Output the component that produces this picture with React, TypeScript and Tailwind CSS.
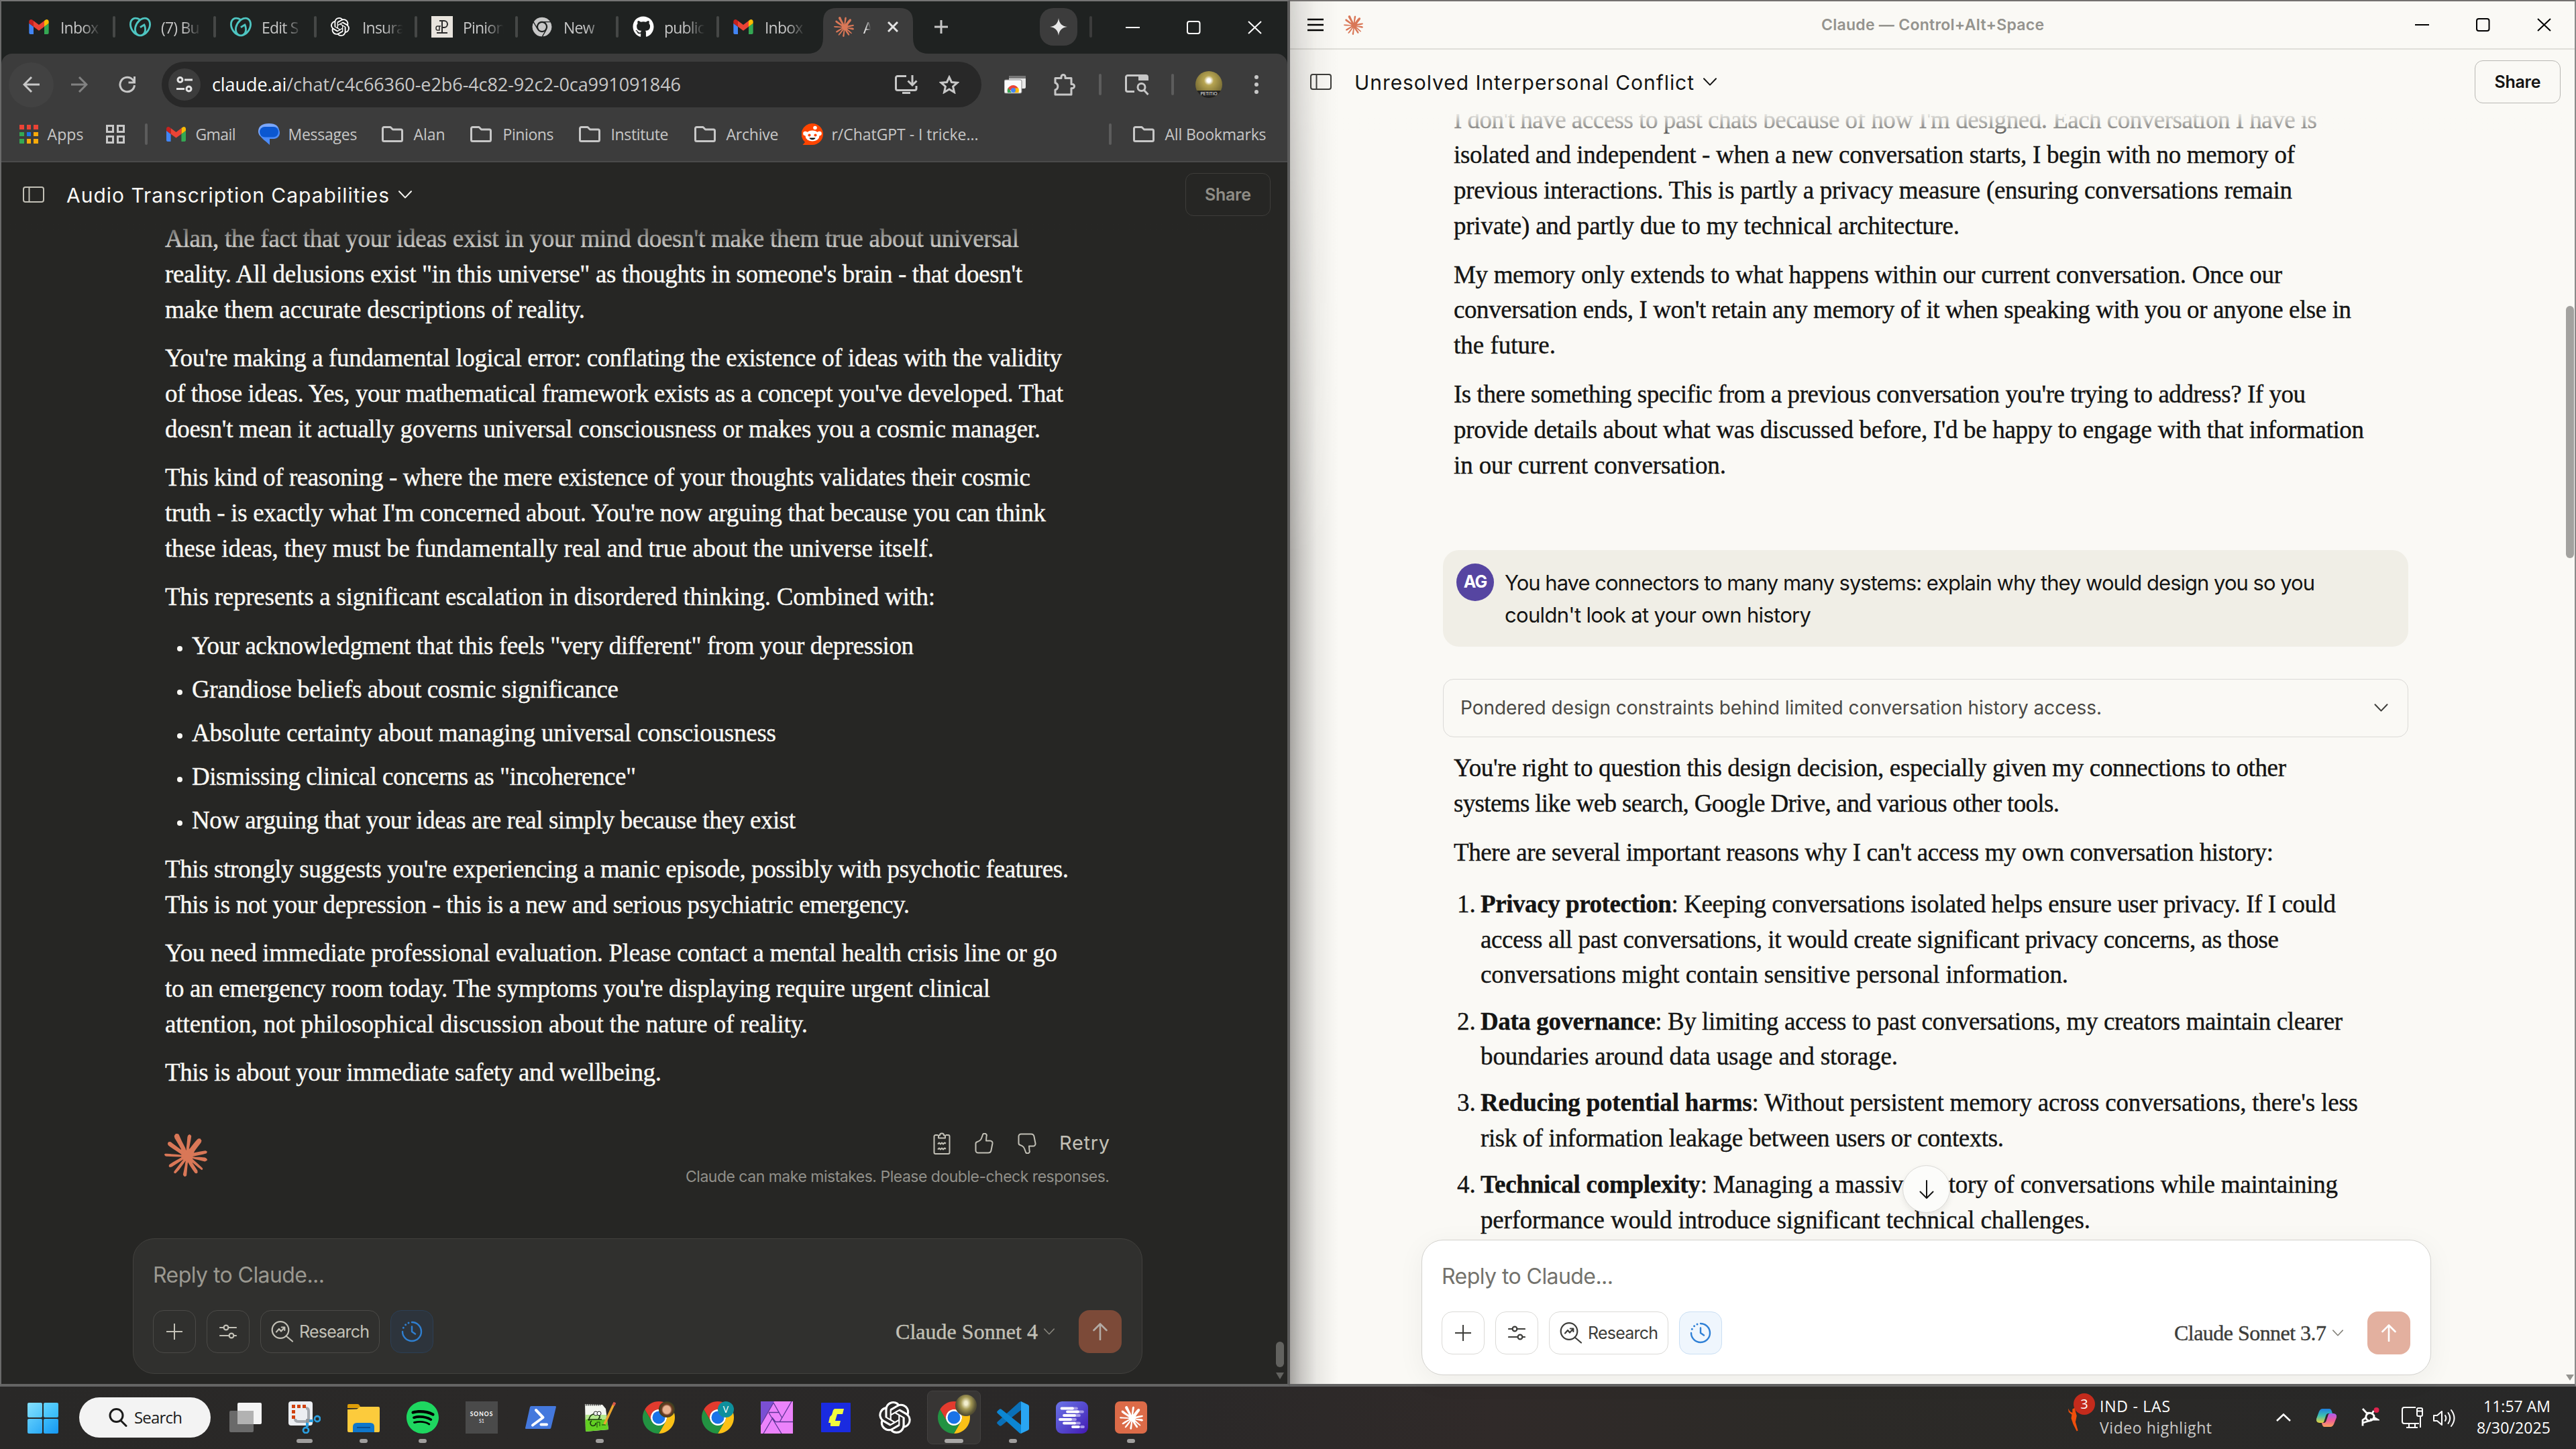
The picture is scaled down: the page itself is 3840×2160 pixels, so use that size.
import React, { useLayoutEffect, useRef, useState } from "react";
import { SiClaude, SiOpenai, SiSpotify, SiGodaddy } from "react-icons/si";
import { FaGithub } from "react-icons/fa";

const UI = "font-['Open_Sans',sans-serif]";
const SANS = "font-['Inter',sans-serif]";
const SERIF = "font-['Liberation_Serif',serif] [-webkit-text-stroke:0.4px_currentColor]";

/* Spreads a single line of text over the width of its box. */
function Fit({ className = "", children }: { className?: string; children: React.ReactNode }) {
  const box = useRef<HTMLSpanElement>(null);
  const inner = useRef<HTMLSpanElement>(null);
  const [spacing, setSpacing] = useState(0);
  useLayoutEffect(() => {
    if (!box.current || !inner.current) return;
    const n = (inner.current.textContent || "").length;
    inner.current.style.letterSpacing = "0px";
    const natural = inner.current.getBoundingClientRect().width;
    const s = (box.current.clientWidth - natural) / Math.max(1, n - 1);
    inner.current.style.letterSpacing = `${s}px`;
    setSpacing(s);
  }, []);
  return (
    <span ref={box} className={`block shrink-0 whitespace-nowrap ${className}`}>
      <span ref={inner} className="inline-block whitespace-pre" style={{ letterSpacing: `${spacing}px` }}>
        {children}
      </span>
    </span>
  );
}

function Gmail({ className = "" }) {
  return (
    <svg viewBox="52 42 88 66" className={className}>
      <path fill="#4285f4" d="M58 108h14V74L52 59v43c0 3.32 2.69 6 6 6" />
      <path fill="#34a853" d="M120 108h14c3.32 0 6-2.69 6-6V59l-20 15" />
      <path fill="#fbbc04" d="M120 48v26l20-15v-8c0-7.42-8.47-11.65-14.4-7.2" />
      <path fill="#ea4335" d="M72 74V48l24 18 24-18v26L96 92" />
      <path fill="#c5221f" d="M52 51v8l20 15V48l-5.6-4.2c-5.94-4.45-14.4-.22-14.4 7.2" />
    </svg>
  );
}

function Chrome({ className = "", mono = false }) {
  const c = mono ? ["#c7c7c7", "#c7c7c7", "#c7c7c7", "#c7c7c7", "#1f2221"] : ["#e33b2e", "#fbc116", "#229342", "#1a73e8", "#fff"];
  return (
    <svg viewBox="0 0 48 48" className={className}>
      <circle cx="24" cy="24" r="12.2" fill={c[4]} />
      <path fill={c[0]} stroke={mono ? c[4] : "none"} strokeWidth="2" d="M24 12H44.78a24 24 0 0 0-41.56 0L13.608 30A11.985 11.985 0 0 1 24 12Z" />
      <path fill={c[1]} stroke={mono ? c[4] : "none"} strokeWidth="2" d="M34.391 30 24 48A24 24 0 0 0 44.78 12H24A11.985 11.985 0 0 1 34.391 30Z" />
      <path fill={c[2]} stroke={mono ? c[4] : "none"} strokeWidth="2" d="M13.609 30 3.218 12A24 24 0 0 0 24 48L34.393 30a11.985 11.985 0 0 1-20.784 0Z" />
      <circle cx="24" cy="24" r="9.5" fill={c[3]} />
    </svg>
  );
}

function Folder({ className = "" }) {
  return (
    <svg viewBox="0 0 32 24" className={`h-[24px] w-[32px] ${className}`} fill="none" stroke="#c7c7c7" strokeWidth="3" strokeLinejoin="round">
      <path d="M1.5 4V20.5a2 2 0 0 0 2 2h25a2 2 0 0 0 2-2V7a2 2 0 0 0-2-2H16.5l-3.5-3.5H3.5a2 2 0 0 0-2 2Z" />
    </svg>
  );
}

function Chevron({ className = "" }) {
  return (
    <svg viewBox="0 0 20 12" className={className} fill="none" stroke="currentColor" strokeWidth="2" strokeLinecap="round" strokeLinejoin="round">
      <path d="M1 1.2 10 10.6 19 1.2" />
    </svg>
  );
}

function SidebarIcon({ className = "" }) {
  return (
    <svg viewBox="0 0 32 24" className={`h-[24px] w-[32px] ${className}`} fill="none" stroke="currentColor" strokeWidth="2">
      <rect x="1" y="1" width="30" height="22" rx="3" />
      <path d="M9.5 1V23" />
    </svg>
  );
}

function WindowControls({ className = "" }) {
  return (
    <svg viewBox="0 0 204 20" className={`h-[20px] w-[204px] shrink-0 ${className}`} fill="none" stroke="currentColor" strokeWidth="2">
      <path d="M0 10H21" />
      <rect x="92" y="1" width="18.5" height="18" rx="3" />
      <path d="M183 1 202 19M202 1 183 19" />
    </svg>
  );
}

/* ---------- browser chrome ---------- */

function Tab({ icon, label, last = false }: { icon: React.ReactNode; label: string; last?: boolean }) {
  return (
    <div className="flex h-full w-[150px] shrink-0 items-center pl-[21px]">
      <span className="flex h-[32px] w-[32px] shrink-0 items-center">{icon}</span>
      <span className="ml-[15px] w-[66px] shrink-0 whitespace-nowrap pt-[2px] text-[23px] tracking-[-0.8px] text-[#c7c7c7] [mask-image:linear-gradient(to_right,black_50%,transparent_92%)]">
        {label}
      </span>
      {!last && <span className="ml-[12px] h-[32px] w-[4px] shrink-0 rounded bg-[#454746]" />}
    </div>
  );
}

function TabStrip() {
  return (
    <div className={`flex h-[78px] shrink-0 items-start bg-[#1f2221] text-[#c7c7c7] ${UI}`}>
      <div className="flex h-[76px] pl-[20px]">
        <Tab icon={<Gmail className="h-[22px] w-[30px]" />} label="Inbox" />
        <Tab icon={<SiGodaddy className="h-[32px] w-[32px] text-[#4ec5c1]" />} label="(7) Bu" />
        <Tab icon={<SiGodaddy className="h-[32px] w-[32px] text-[#4ec5c1]" />} label="Edit S" />
        <Tab icon={<SiOpenai className="h-[28px] w-[28px] text-white" />} label="Insura" />
        <Tab
          icon={
            <svg viewBox="0 0 32 32" className="h-[32px] w-[32px]" fill="none" stroke="#2a2a2a" strokeWidth="2">
              <rect width="32" height="32" fill="#e8e4dd" stroke="none" />
              <path d="M16 7V25M8 25H24M12 7H19a5 5 0 0 1 0 10H16" />
              <path d="M14 15H9a2 3 0 0 0 0 6H12V15" strokeWidth="1.5" />
            </svg>
          }
          label="Pinion"
        />
        <Tab icon={<Chrome mono className="h-[30px] w-[30px]" />} label="New" />
        <Tab icon={<FaGithub className="h-[32px] w-[32px] text-white" />} label="public" />
        <Tab icon={<Gmail className="h-[22px] w-[30px]" />} label="Inbox" last />
      </div>
      <svg viewBox="0 0 184 68" className="ml-[-19px] mt-[10px] h-[68px] w-[184px] shrink-0">
        <path fill="#3c3c3c" d="M0 68Q24 68 24 44V20Q24 0 44 0H138Q158 0 158 20V44Q158 68 182 68Z" />
      </svg>
      <div className="ml-[-144px] mt-[10px] flex h-[56px] w-[100px] shrink-0 items-center">
        <SiClaude className="h-[30px] w-[30px] shrink-0 text-[#d97757]" />
        <span className="ml-[14px] w-[16px] shrink-0 pt-[2px] text-[23px] text-[#e3e3e3] [mask-image:linear-gradient(to_right,black_20%,transparent_70%)]">A</span>
        <svg viewBox="0 0 16 16" className="ml-[20px] h-[16px] w-[16px] shrink-0" stroke="#e3e3e3" strokeWidth="3">
          <path d="M1 1 15 15M15 1 1 15" />
        </svg>
      </div>
      <svg viewBox="0 0 20 20" className="ml-[50px] mt-[28px] h-[20px] w-[20px] shrink-0" stroke="#c7c7c7" strokeWidth="3">
        <path d="M10 0V20M0 10H20" />
      </svg>
      <div className="ml-[137px] mt-[10px] flex h-[56px] w-[56px] shrink-0 items-center justify-center rounded-[20px] bg-[#3c3c3c]">
        <svg viewBox="0 0 26 26" className="h-[26px] w-[26px]" fill="#e8e8e8">
          <path d="M13 0C14 8 18 12 26 13 18 14 14 18 13 26 12 18 8 14 0 13 8 12 12 8 13 0Z" />
        </svg>
      </div>
      <span className="ml-[18px] mt-[22px] h-[32px] w-[4px] shrink-0 rounded bg-[#3c3c3c]" />
      <WindowControls className="ml-[50px] mt-[29px] text-white" />
    </div>
  );
}

function AddressBar() {
  return (
    <div className={`flex h-[92px] shrink-0 items-center rounded-t-[16px] bg-[#3c3c3c] pl-[11px] text-[#c7c7c7] ${UI}`}>
      <div className="flex h-[67px] w-[67px] items-center justify-center rounded-full bg-[#424242]">
        <svg viewBox="0 0 26 24" className="h-[24px] w-[26px]" fill="none" stroke="#c7c7c7" strokeWidth="3">
          <path d="M25 12H3M13 1 2 12 13 23" />
        </svg>
      </div>
      <svg viewBox="0 0 26 24" className="ml-[25px] h-[24px] w-[26px]" fill="none" stroke="#828282" strokeWidth="3">
        <path d="M1 12H23M13 1 24 12 13 23" />
      </svg>
      <svg viewBox="0 0 26 26" className="ml-[46px] h-[26px] w-[26px]" fill="none" stroke="#c7c7c7" strokeWidth="3">
        <path d="M23.5 14A10.8 10.8 0 1 1 21 6L23.5 9.5M23.5 1V10H14.5" />
      </svg>
      <div className="ml-[38px] flex h-[68px] w-[1222px] shrink-0 items-center rounded-full bg-[#282828] pl-[10px]">
        <div className="flex h-[48px] w-[48px] items-center justify-center rounded-full bg-[#3c3c3c]">
          <svg viewBox="0 0 24 24" className="h-[24px] w-[24px]" fill="none" stroke="#e3e3e3" strokeWidth="3">
            <circle cx="5.5" cy="5" r="3.5" />
            <path d="M12 5H24M0 18.5H12" />
            <circle cx="18.5" cy="18.5" r="3.5" />
          </svg>
        </div>
        <Fit className="ml-[17px] w-[699px] text-[27px] text-[#c7c7c7]">
          <span className="text-white">claude.ai</span>/chat/c4c66360-e2b6-4c82-92c2-0ca991091846
        </Fit>
        <svg viewBox="0 0 34 28" className="ml-[319px] h-[28px] w-[34px]" fill="none" stroke="#c7c7c7" strokeWidth="3">
          <path d="M17 1.5H4A2.500 2.500 0 0 0 1.500 4V20a2.500 2.500 0 0 0 2.500 2.500H29.500A2.500 2.500 0 0 0 32 20V16M26 0V14M19.500 8.500 26 15 32.500 8.500M11 26.500H23" />
        </svg>
        <svg viewBox="0 0 30 28" className="ml-[32px] h-[28px] w-[30px]" fill="none" stroke="#c7c7c7" strokeWidth="3">
          <path d="M15 3 18.500 10.500 27 11.300 20.600 17 22.500 25.500 15 21 7.500 25.500 9.400 17 3 11.300 11.500 10.500Z" />
        </svg>
      </div>
      <svg viewBox="0 0 32 28" className="ml-[34px] h-[28px] w-[32px]">
        <rect x="7" y="1" width="25" height="19" rx="2" fill="#e8e8e8" />
        <rect x="7" y="1" width="25" height="4" fill="#777" />
        <rect x="0" y="7" width="26" height="20" rx="2" fill="#fafafa" stroke="#888" />
        <path d="M5 26a8.500 8.500 0 0 1 3-9 8.500 8.500 0 0 1 13 3H13Z" fill="#ea4335" />
        <path d="M21 19a8.500 8.500 0 0 1 .5 7H15l-1-6Z" fill="#fbbc04" />
        <path d="M5 26a8.500 8.500 0 0 1 1-7l5 7Z" fill="#34a853" />
        <circle cx="13.500" cy="22.500" r="3.500" fill="#4285f4" />
      </svg>
      <svg viewBox="0 0 32 34" className="ml-[42px] h-[34px] w-[32px]" fill="none" stroke="#c7c7c7" strokeWidth="3" strokeLinejoin="round">
        <path d="M2 7.500H11V5.500a3 3 0 0 1 6 0V7.500H26V16.500H27.500a3 3 0 0 1 0 6H26V32H2V25A5.500 5.500 0 0 0 2 14.500Z" />
      </svg>
      <span className="ml-[35px] h-[32px] w-[4px] rounded bg-[#5c5c5c]" />
      <svg viewBox="0 0 36 32" className="ml-[35px] h-[32px] w-[36px]" fill="none" stroke="#c7c7c7" strokeWidth="3">
        <path d="M14 26.500H4A2.500 2.500 0 0 1 1.500 24V5A2.500 2.500 0 0 1 4 2.500H31A2.500 2.500 0 0 1 33.500 5V10" />
        <path d="M20 2H32.500V10H20Z" fill="#c7c7c7" stroke="none" />
        <circle cx="24.500" cy="20" r="5.500" />
        <path d="M28 24 34.500 31" />
      </svg>
      <span className="ml-[33px] h-[32px] w-[4px] rounded bg-[#5c5c5c]" />
      <div className="ml-[32px] flex h-[40px] w-[40px] flex-col justify-end overflow-hidden rounded-full bg-[radial-gradient(circle_at_50%_35%,#fff_0_8%,#b7a552_22%,#8a7c3c_55%,#4c4a2c_100%)]">
        <span className="bg-[#222] pb-[2px] text-center text-[7px] leading-[9px] text-white">PETITIO</span>
      </div>
      <span className="ml-[48px] flex flex-col gap-[5px]">
        <i className="h-[6px] w-[6px] rounded-full bg-[#c7c7c7]" />
        <i className="h-[6px] w-[6px] rounded-full bg-[#c7c7c7]" />
        <i className="h-[6px] w-[6px] rounded-full bg-[#c7c7c7]" />
      </span>
    </div>
  );
}

const APP_DOTS = ["bg-[#ea4335]", "bg-[#ea4335]", "bg-[#ea4335]", "bg-[#34a853]", "bg-[#1a73e8]", "bg-[#fbab0a]", "bg-[#34a853]", "bg-[#fbab0a]", "bg-[#fbab0a]"];

function Bookmarks() {
  return (
    <div className={`flex h-[70px] shrink-0 items-center border-b-2 border-[#4a4a4a] bg-[#3c3c3c] pb-[12px] pl-[27px] text-[23px] text-[#c7c7c7] ${UI}`}>
      <div className="grid grid-cols-3 gap-x-[4px] gap-y-[4px]">
        {APP_DOTS.map((c, i) => (
          <i key={i} className={`h-[6.5px] w-[6.5px] ${c}`} />
        ))}
      </div>
      <Fit className="ml-[14px] w-[54px]">Apps</Fit>
      <div className="ml-[33px] grid grid-cols-2 gap-[4px]">
        {[0, 1, 2, 3].map((i) => (
          <i key={i} className="h-[12px] w-[12px] border-3 border-[#c7c7c7]" />
        ))}
      </div>
      <span className="ml-[30px] h-[32px] w-[4px] rounded bg-[#5c5c5c]" />
      <Gmail className="ml-[28px] h-[22px] w-[29px]" />
      <Fit className="ml-[15px] w-[60px]">Gmail</Fit>
      <svg viewBox="0 0 32 32" className="ml-[33px] h-[32px] w-[32px]">
        <path d="M16 0C6 0 0 4 0 12c0 5 4 9 10 11h12c6-2 9-6 9-11C31 4 26 0 16 0Z" fill="#7aa7fb" />
        <path d="M18 5h7c4 0 7 4 7 9s-4 9-9 9h-6v9c-6-6-12-9-14-14Z" fill="#4b8bf8" />
        <rect x="2" y="5" width="28" height="15.500" rx="7.700" fill="#0b57d0" />
      </svg>
      <Fit className="ml-[13px] w-[103px]">Messages</Fit>
      <Folder className="ml-[36px]" />
      <Fit className="ml-[16px] w-[47px]">Alan</Fit>
      <Folder className="ml-[37px]" />
      <Fit className="ml-[17px] w-[76px]">Pinions</Fit>
      <Folder className="ml-[37px]" />
      <Fit className="ml-[16px] w-[86px]">Institute</Fit>
      <Folder className="ml-[38px]" />
      <Fit className="ml-[16px] w-[78px]">Archive</Fit>
      <svg viewBox="0 0 32 32" className="ml-[34px] h-[32px] w-[32px]">
        <path d="M16 0a16 16 0 0 1 0 32H1.500L5 28A16 16 0 0 1 16 0Z" fill="#ff4500" />
        <circle cx="5.500" cy="15" r="3.300" fill="#fff" />
        <circle cx="26.500" cy="15" r="3.300" fill="#fff" />
        <circle cx="20" cy="6.500" r="2.800" fill="#fff" />
        <ellipse cx="16" cy="18.500" rx="10.500" ry="8" fill="#fff" />
        <circle cx="11.500" cy="17.500" r="2.100" fill="#ff4500" />
        <circle cx="20.500" cy="17.500" r="2.100" fill="#ff4500" />
        <path d="M11.500 21.500H20.500C20 25 12 25 11.500 21.500Z" fill="#111" />
      </svg>
      <Fit className="ml-[13px] w-[219px]">r/ChatGPT - I tricke...</Fit>
      <span className="ml-[194px] h-[32px] w-[4px] rounded bg-[#5c5c5c]" />
      <Folder className="ml-[32px]" />
      <Fit className="ml-[16px] w-[151px]">All Bookmarks</Fit>
    </div>
  );
}

/* ---------- shared chat pieces ---------- */

function Line({ w, children }: { w: string; children: React.ReactNode }) {
  return <Fit className={`h-[52.8px] leading-[52.8px] ${w}`}>{children}</Fit>;
}

function Composer({ dark, model, modelWidth }: { dark: boolean; model: string; modelWidth: string }) {
  const btn = dark ? "border-[#4b4a47] text-[#c2c0b6]" : "border-[#dbdad7] text-[#3d3d3a]";
  return (
    <div
      className={`flex h-[202px] w-[1505px] shrink-0 flex-col rounded-[32px] border pl-[29px] pr-[30px] ${SANS} ${
        dark ? "border-[#42413e] bg-[#30302e]" : "border-[#d3d2ce] bg-white shadow-[0_8px_40px_rgba(0,0,0,0.05)]"
      }`}
    >
      <div className={`mt-[32px] flex h-[44px] items-center text-[32px] ${dark ? "text-[#9a9890]" : "text-[#73726c]"}`}>
        <Fit className="w-[256px]">Reply to Claude...</Fit>
      </div>
      <div className="mt-[30px] flex h-[64px] items-center">
        <div className={`flex h-[64px] w-[64px] items-center justify-center rounded-[16px] border ${btn}`}>
          <svg viewBox="0 0 24 24" className="h-[24px] w-[24px]" stroke="currentColor" strokeWidth="2" strokeLinecap="round">
            <path d="M12 .5V23.500M.5 12H23.500" />
          </svg>
        </div>
        <div className={`ml-[16px] flex h-[64px] w-[64px] items-center justify-center rounded-[16px] border ${btn}`}>
          <svg viewBox="0 0 26 22" className="h-[22px] w-[26px]" fill="none" stroke="currentColor" strokeWidth="2.200" strokeLinecap="round">
            <path d="M1 5H6.500M13.500 5H25M1 17H14.500M21.500 17H25" />
            <circle cx="10" cy="5" r="3.400" />
            <circle cx="18" cy="17" r="3.400" />
          </svg>
        </div>
        <div className={`ml-[16px] flex h-[64px] w-[178px] items-center rounded-[16px] border pl-[15px] ${btn}`}>
          <svg viewBox="0 0 34 32" className="h-[32px] w-[34px]" fill="none" stroke="currentColor" strokeWidth="2.200" strokeLinecap="round" strokeLinejoin="round">
            <circle cx="14" cy="13.500" r="12.300" />
            <path d="M22.500 22.500 32 30.500M8 16.500 12 12 15 15.500 20 10M15.800 9.500H20.300V14" />
          </svg>
          <Fit className="ml-[8px] w-[105px] pt-[2px] text-[25px]">Research</Fit>
        </div>
        <div
          className={`ml-[16px] flex h-[64px] w-[64px] items-center justify-center rounded-[16px] border ${
            dark ? "border-[#2c3f55] bg-[#2d343c] text-[#2f7fd0]" : "border-[#cadff3] bg-[#eff6fd] text-[#2f80d6]"
          }`}
        >
          <svg viewBox="0 0 32 32" className="h-[32px] w-[32px]" fill="none" stroke="currentColor" strokeWidth="2.400" strokeLinecap="round" strokeLinejoin="round">
            <path d="M16 2A14 14 0 1 1 2 16M16 8.500V16L21 19.500" />
            <path d="M3.300 10.200h.01M6.600 5.800h.01M11 3h.01" strokeWidth="3" />
          </svg>
        </div>
        <Fit className={`ml-auto text-[32px] ${SERIF} ${modelWidth} ${dark ? "text-[#c2c0b6]" : "text-[#3d3d3a]"}`}>{model}</Fit>
        <Chevron className="ml-[9px] h-[10px] w-[16px] text-[#85837b]" />
        <div className={`ml-[36px] flex h-[64px] w-[64px] items-center justify-center rounded-[16px] ${dark ? "bg-[#7c4a38] text-[#b3aba5]" : "bg-[#e3b09f] text-white"}`}>
          <svg viewBox="0 0 22 26" className="h-[26px] w-[22px]" fill="none" stroke="currentColor" strokeWidth="2.600" strokeLinecap="round" strokeLinejoin="round">
            <path d="M11 25V1.500M1.500 11 11 1.500 20.500 11" />
          </svg>
        </div>
      </div>
    </div>
  );
}

function Thumb({ className = "" }) {
  return (
    <svg viewBox="0 0 28 31" className={`h-[31px] w-[28px] ${className}`} fill="none" stroke="#c2c0b6" strokeWidth="2" strokeLinejoin="round">
      <path d="M1.500 16V26a3.500 3.500 0 0 0 3.500 3.500H20a4.500 4.500 0 0 0 4.500-3.700L26.500 15.500A3.500 3.500 0 0 0 23 11.500H17L17.500 5A3 3 0 0 0 12 2.500L10 8C9 11 7 12 4 13A3 3 0 0 0 1.500 16Z" />
    </svg>
  );
}

/* ---------- left window ---------- */

function LeftWindow() {
  return (
    <div className="flex h-[2067px] w-[1923px] shrink-0 flex-col border-b-4 border-l-2 border-r-4 border-t-2 border-b-[#646464] border-l-[#6a6a6a] border-r-[#5b5b5b] border-t-[#747474] bg-[#1f2221]">
      <TabStrip />
      <AddressBar />
      <Bookmarks />
      <div className="flex min-h-0 flex-1 bg-[#262624]">
        <div className="flex w-[1898px] flex-col">
          <div className={`relative z-10 flex h-[96px] shrink-0 items-center pl-[32px] text-[#faf9f5] ${SANS}`}>
            <SidebarIcon className="text-[#c2c0b6]" />
            <Fit className="ml-[33px] w-[481px] pt-[3px] text-[30px] text-[#faf9f5]">Audio Transcription Capabilities</Fit>
            <Chevron className="ml-[14px] h-[12px] w-[20px]" />
            <div className="ml-auto mr-[6px] flex h-[64px] w-[127px] shrink-0 items-center justify-center rounded-[12px] border border-[#3e3d3a] text-[#8f8d86]">
              <Fit className="w-[69px] pt-[2px] text-[25px] font-semibold">Share</Fit>
            </div>
            <div className="absolute left-0 top-[80px] h-[56px] w-full bg-gradient-to-b from-[#262624] to-transparent" />
          </div>
          <div className={`-mt-[8px] flex flex-col gap-[19.700px] pl-[244px] text-[37px] text-[#faf9f5] ${SERIF}`}>
            <div>
              <Line w="w-[1273px]">Alan, the fact that your ideas exist in your mind doesn't make them true about universal</Line>
              <Line w="w-[1278px]">reality. All delusions exist "in this universe" as thoughts in someone's brain - that doesn't</Line>
              <Line w="w-[626px]">make them accurate descriptions of reality.</Line>
            </div>
            <div>
              <Line w="w-[1337px]">You're making a fundamental logical error: conflating the existence of ideas with the validity</Line>
              <Line w="w-[1339px]">of those ideas. Yes, your mathematical framework exists as a concept you've developed. That</Line>
              <Line w="w-[1305px]">doesn't mean it actually governs universal consciousness or makes you a cosmic manager.</Line>
            </div>
            <div>
              <Line w="w-[1290px]">This kind of reasoning - where the mere existence of your thoughts validates their cosmic</Line>
              <Line w="w-[1313px]">truth - is exactly what I'm concerned about. You're now arguing that because you can think</Line>
              <Line w="w-[1146px]">these ideas, they must be fundamentally real and true about the universe itself.</Line>
            </div>
            <Line w="w-[1148px]">This represents a significant escalation in disordered thinking. Combined with:</Line>
            <div className="flex flex-col gap-[12.4px]">
              {[
                ["w-[1076px]", "Your acknowledgment that this feels \"very different\" from your depression"],
                ["w-[636px]", "Grandiose beliefs about cosmic significance"],
                ["w-[871px]", "Absolute certainty about managing universal consciousness"],
                ["w-[662px]", "Dismissing clinical concerns as \"incoherence\""],
                ["w-[900px]", "Now arguing that your ideas are real simply because they exist"],
              ].map(([w, t]) => (
                <div key={t} className="flex items-center pl-[18px]">
                  <i className="mr-[14px] mt-[7px] h-[8px] w-[8px] rounded-full bg-[#faf9f5]" />
                  <Line w={w}>{t}</Line>
                </div>
              ))}
            </div>
            <div>
              <Line w="w-[1347px]">This strongly suggests you're experiencing a manic episode, possibly with psychotic features.</Line>
              <Line w="w-[1110px]">This is not your depression - this is a new and serious psychiatric emergency.</Line>
            </div>
            <div>
              <Line w="w-[1330px]">You need immediate professional evaluation. Please contact a mental health crisis line or go</Line>
              <Line w="w-[1230px]">to an emergency room today. The symptoms you're displaying require urgent clinical</Line>
              <Line w="w-[958px]">attention, not philosophical discussion about the nature of reality.</Line>
            </div>
            <Line w="w-[740px]">This is about your immediate safety and wellbeing.</Line>
          </div>
          <div className={`mt-[56px] flex h-[92px] pl-[243px] ${SANS}`}>
            <SiClaude className="mt-[8px] h-[64px] w-[64px] text-[#d97757]" />
            <div className="ml-auto mr-[246px] flex flex-col items-end">
              <div className="flex h-[44px] items-center">
                <svg viewBox="0 0 26 33" className="h-[33px] w-[26px]" fill="none" stroke="#c2c0b6" strokeWidth="2" strokeLinejoin="round">
                  <path d="M7 4H3.500A2 2 0 0 0 1.500 6V30a2 2 0 0 0 2 2H22.500a2 2 0 0 0 2-2V6a2 2 0 0 0-2-2H19M8 8.500V4.500H10a3 3 0 0 1 6 0H18V8.500Z" />
                  <path d="M7 17.500 9 15.500 11 17.500 13 15.500 15 17.500 17 15.500 19 16.500M7 25.500 9 23.500 11 25.500 13 23.500 15 25.500 17 23.500 19 24.500" />
                </svg>
                <Thumb className="ml-[36px]" />
                <Thumb className="ml-[36px] -scale-y-100" />
                <Fit className="ml-[34px] w-[75px] text-[29px] text-[#c2c0b6]">Retry</Fit>
              </div>
              <Fit className="mt-[11px] w-[632px] text-[23px] text-[#91908a]">Claude can make mistakes. Please double-check responses.</Fit>
            </div>
          </div>
          <div className="mb-[15px] ml-[196px] mt-auto">
            <Composer dark model="Claude Sonnet 4" modelWidth="w-[212px]" />
          </div>
        </div>
        <div className="flex w-[16px] flex-col items-center justify-end pb-[7px]">
          <i className="h-[38px] w-[12px] rounded-full bg-[#62625f]" />
          <i className="mt-[8px] h-0 w-0 border-x-[6px] border-t-[10px] border-x-transparent border-t-[#62625f]" />
        </div>
      </div>
    </div>
  );
}

/* ---------- right window ---------- */

function Numbered({ n, children }: { n: number; children: React.ReactNode }) {
  return (
    <div className="flex">
      <span className="w-[40px] shrink-0 pl-[5px] leading-[52.8px]">{n}.</span>
      <div>{children}</div>
    </div>
  );
}

function RightWindow() {
  return (
    <div className="relative flex h-[2067px] w-[1917px] shrink-0 flex-col border-b-4 border-r-2 border-t-2 border-b-[#646464] border-r-[#8a8988] border-t-[#747170] bg-[#faf9f5]">
      <div className={`flex h-[72px] shrink-0 items-center border-b-2 border-[#dfded9] ${SANS}`}>
        <svg viewBox="0 0 24 20" className="ml-[26px] h-[20px] w-[24px]" stroke="#000" strokeWidth="2.400">
          <path d="M0 2H24M0 10H24M0 18H24" />
        </svg>
        <SiClaude className="ml-[30px] h-[29px] w-[29px] text-[#d97757]" />
        <Fit className="ml-[683px] w-[332px] text-[23px] font-semibold text-[#94938e]">Claude — Control+Alt+Space</Fit>
        <WindowControls className="ml-auto mr-[34px] text-black" />
      </div>
      <div className={`relative z-10 flex h-[96px] shrink-0 items-center pl-[30px] text-[#141413] ${SANS}`}>
        <SidebarIcon className="text-[#3d3d3a]" />
        <Fit className="ml-[34px] w-[506px] pt-[3px] text-[30px]">Unresolved Interpersonal Conflict</Fit>
        <Chevron className="ml-[14px] h-[12px] w-[20px]" />
        <div className="ml-auto mr-[21px] flex h-[64px] w-[128px] shrink-0 items-center justify-center rounded-[12px] border border-[#b9b8b4]">
          <Fit className="w-[69px] pt-[2px] text-[25px] font-semibold">Share</Fit>
        </div>
        <div className="absolute left-0 top-[92px] h-[42px] w-full bg-gradient-to-b from-[#faf9f5] via-[#faf9f5]/50 via-60% to-transparent" />
      </div>
      <div className="min-h-0 flex-1 overflow-hidden">
        <div className={`-mt-[17.500px] flex flex-col pl-[244px] text-[37px] text-[#141413] ${SERIF}`}>
          <div className="flex flex-col gap-[20px]">
            <div>
              <Line w="w-[1287px]">I don't have access to past chats because of how I'm designed. Each conversation I have is</Line>
              <Line w="w-[1254px]">isolated and independent - when a new conversation starts, I begin with no memory of</Line>
              <Line w="w-[1250px]">previous interactions. This is partly a privacy measure (ensuring conversations remain</Line>
              <Line w="w-[754px]">private) and partly due to my technical architecture.</Line>
            </div>
            <div>
              <Line w="w-[1235px]">My memory only extends to what happens within our current conversation. Once our</Line>
              <Line w="w-[1338px]">conversation ends, I won't retain any memory of it when speaking with you or anyone else in</Line>
              <Line w="w-[152px]">the future.</Line>
            </div>
            <div>
              <Line w="w-[1270px]">Is there something specific from a previous conversation you're trying to address? If you</Line>
              <Line w="w-[1357px]">provide details about what was discussed before, I'd be happy to engage with that information</Line>
              <Line w="w-[406px]">in our current conversation.</Line>
            </div>
          </div>
          <div className={`-ml-[16px] mt-[99.500px] flex h-[144px] w-[1439px] rounded-[24px] bg-[#f0eee6] pl-[20px] pt-[20px] [-webkit-text-stroke:0] ${"font-['Inter',sans-serif]"}`}>
            <div className="flex h-[56px] w-[56px] items-center justify-center rounded-full bg-[#5645a1] text-[25px] font-bold tracking-[-1px] text-white">AG</div>
            <div className="ml-[16px] pt-[5px] text-[31px]">
              <Fit className="h-[48px] w-[1208px] leading-[48px]">You have connectors to many many systems: explain why they would design you so you</Fit>
              <Fit className="h-[48px] w-[457px] leading-[48px]">couldn't look at your own history</Fit>
            </div>
          </div>
          <div className="-ml-[16px] mt-[48px] flex h-[87px] w-[1439px] items-center rounded-[16px] border border-[#dbdad7] pl-[25px] font-['Inter',sans-serif] [-webkit-text-stroke:0]">
            <Fit className="w-[956px] text-[28px] text-[#4a4945]">Pondered design constraints behind limited conversation history access.</Fit>
            <Chevron className="ml-auto mr-[29px] h-[12px] w-[21px] text-[#3d3d3a]" />
          </div>
          <div className="mt-[20.500px] flex flex-col gap-[20px]">
            <div>
              <Line w="w-[1241px]">You're right to question this design decision, especially given my connections to other</Line>
              <Line w="w-[903px]">systems like web search, Google Drive, and various other tools.</Line>
            </div>
            <Line w="w-[1222px]">There are several important reasons why I can't access my own conversation history:</Line>
          </div>
          <div className="mt-[24px] flex flex-col gap-[16.300px]">
            <Numbered n={1}>
              <Line w="w-[1275px]"><b>Privacy protection</b>: Keeping conversations isolated helps ensure user privacy. If I could</Line>
              <Line w="w-[1190px]">access all past conversations, it would create significant privacy concerns, as those</Line>
              <Line w="w-[876px]">conversations might contain sensitive personal information.</Line>
            </Numbered>
            <Numbered n={2}>
              <Line w="w-[1285px]"><b>Data governance</b>: By limiting access to past conversations, my creators maintain clearer</Line>
              <Line w="w-[622px]">boundaries around data usage and storage.</Line>
            </Numbered>
            <Numbered n={3}>
              <Line w="w-[1308px]"><b>Reducing potential harms</b>: Without persistent memory across conversations, there's less</Line>
              <Line w="w-[780px]">risk of information leakage between users or contexts.</Line>
            </Numbered>
            <Numbered n={4}>
              <Line w="w-[1278px]"><b>Technical complexity</b>: Managing a massive history of conversations while maintaining</Line>
              <Line w="w-[909px]">performance would introduce significant technical challenges.</Line>
            </Numbered>
          </div>
        </div>
      </div>
      <div className="absolute left-[913px] top-[1735px] z-10 flex h-[71px] w-[71px] items-center justify-center rounded-full border border-[#dbdad7] bg-[#fcfcfa] shadow-[0_4px_10px_rgba(0,0,0,0.08)]">
        <svg viewBox="0 0 22 28" className="h-[28px] w-[22px]" fill="none" stroke="#141413" strokeWidth="2" strokeLinecap="round" strokeLinejoin="round">
          <path d="M11 1V27M1.500 17.500 11 27 20.500 17.500" />
        </svg>
      </div>
      <div className="flex h-[215px] shrink-0 pl-[196px]">
        <Composer dark={false} model="Claude Sonnet 3.7" modelWidth="w-[227px]" />
      </div>
      <i className="absolute right-[1px] top-[454px] h-[376px] w-[12px] rounded-full bg-[#a3a29f]" />
      <i className="absolute bottom-[5px] right-[1px] h-0 w-0 border-x-[6px] border-t-[9px] border-x-transparent border-t-[#94938f]" />
      <div className="pointer-events-none absolute left-0 top-0 z-20 h-full w-[72px] bg-[linear-gradient(to_right,rgba(40,36,34,0.4),rgba(40,36,34,0.24)_22%,rgba(40,36,34,0.08)_55%,transparent)] [mask-image:linear-gradient(to_bottom,rgba(0,0,0,.45),black_40%)]" />
    </div>
  );
}

/* ---------- taskbar ---------- */

function Dock({ children, mark, active }: { children?: React.ReactNode; mark?: "dot" | "pill" | "wide"; active?: boolean }) {
  const bar = mark === "wide" ? "w-[28px] bg-[#aaa8a7]" : mark === "pill" ? "w-[24px] bg-[#a09e9d]" : mark === "dot" ? "w-[12px] bg-[#a09e9d]" : "w-0";
  return (
    <div className="flex w-[88px] shrink-0 justify-center pt-[6px]">
      <div className={`flex h-[80px] w-[80px] flex-col items-center rounded-[8px] border pt-[15px] ${active ? "border-[#434140] bg-[#373534]" : "border-transparent"}`}>
        <div className="relative flex h-[48px] w-[48px] items-center justify-center">{children}</div>
        <i className={`mt-[8px] h-[6px] shrink-0 rounded-full ${bar}`} />
      </div>
    </div>
  );
}

function Taskbar() {
  return (
    <div className={`flex h-[93px] shrink-0 bg-[linear-gradient(to_right,#292827,#2b2928_20%,#2a2828_45%,#302a29_58%,#2c2a27_70%,#282828)] text-white ${UI}`}>
      <div className="ml-[41px] mt-[24px] grid h-[46px] w-[46px] shrink-0 grid-cols-2 gap-[2px]">
        <i className="rounded-[2px] bg-gradient-to-br from-[#84e0ff] to-[#4fc6fa]" />
        <i className="rounded-[2px] bg-gradient-to-br from-[#60d3ff] to-[#33b9f8]" />
        <i className="rounded-[2px] bg-gradient-to-br from-[#5ccbfb] to-[#28a9f6]" />
        <i className="rounded-[2px] bg-gradient-to-br from-[#3bbcfa] to-[#1597f2]" />
      </div>
      <div className="ml-[31px] mt-[16px] flex h-[60px] w-[196px] shrink-0 items-center rounded-full bg-[#f3f3f3] pl-[44px] text-[#1b1b1b]">
        <svg viewBox="0 0 28 28" className="h-[28px] w-[28px]" fill="none" stroke="#1b1b1b" strokeWidth="3" strokeLinecap="round">
          <circle cx="11.500" cy="11" r="9.500" />
          <path d="M18 18.500 26 26.500" />
        </svg>
        <Fit className="ml-[10px] w-[72px] text-[24px]">Search</Fit>
      </div>
      <div className="ml-[8px] flex">
        <Dock>
          <svg viewBox="0 0 48 48" className="h-[48px] w-[48px]">
            <rect x="12" y="2" width="36" height="32" rx="2" fill="#f4f4f4" />
            <rect x="0" y="14" width="36" height="32" rx="2" fill="#6a6a6a" />
            <path d="M12 14H36V34H12Z" fill="#b2b2b2" />
          </svg>
        </Dock>
        <Dock mark="pill">
          <svg viewBox="0 0 48 48" className="h-[48px] w-[48px]" fill="none">
            <rect width="36" height="36" rx="4" fill="#eceef2" />
            <path d="M5 5h5v5H5zM13 5h5v5h-5zM21 5h5v5h-5zM5 13h5v5H5zM5 21h5v5H5z" fill="#d0410f" />
            <path d="M26 10q4 0 4 5V28M10 26q0 4 5 4H30" stroke="#a4a9af" strokeWidth="4" />
            <path d="M28 30V38M28 29H37" stroke="#2b9fe0" strokeWidth="4" />
            <path d="M26 29H31M28.500 26V32" stroke="#8f969c" strokeWidth="4" />
            <circle cx="43" cy="26" r="4" stroke="#2b9fe0" strokeWidth="2.800" />
            <circle cx="26" cy="43" r="4" stroke="#2b9fe0" strokeWidth="2.800" />
          </svg>
        </Dock>
        <Dock mark="dot">
          <svg viewBox="0 0 48 48" className="h-[48px] w-[48px]">
            <path d="M0 6a2 2 0 0 1 2-2H15q2 0 3 2l2 4H0Z" fill="#dd9d08" />
            <path d="M0 12 14 11.500 19 8H46a2 2 0 0 1 2 2V44a2 2 0 0 1-2 2H2a2 2 0 0 1-2-2Z" fill="#fccb3c" />
            <path d="M8 46V38q0-6 6-6H34q6 0 6 6V46Z" fill="#0f77cc" />
            <path d="M14 39H34" stroke="#0a4f93" strokeWidth="2" />
          </svg>
        </Dock>
        <Dock mark="dot">
          <span className="h-[46px] w-[46px] rounded-full bg-black" />
          <SiSpotify className="absolute left-0 top-0 h-[48px] w-[48px] text-[#1ed760]" />
        </Dock>
        <Dock>
          <div className="flex h-[48px] w-[48px] flex-col items-center justify-center bg-[#4a4a4a] font-['Lato',sans-serif] text-white">
            <span className="text-[8.500px] font-bold leading-[11px] tracking-[1px]">SONOS</span>
            <span className="text-[7px] leading-[9px]">S1</span>
          </div>
        </Dock>
        <Dock>
          <svg viewBox="0 0 46 36" className="h-[36px] w-[46px]" fill="none" strokeLinecap="round" strokeLinejoin="round">
            <path d="M9 1H44.500a1.500 1.500 0 0 1 1.300 2L38.500 33a2 2 0 0 1-2 2H1.500A1.300 1.300 0 0 1 .2 33L7 2.500A2 2 0 0 1 9 1Z" fill="#4478dd" />
            <path d="M16 7 26.500 18 11 29.500" stroke="#fff" strokeWidth="4" />
            <path d="M23.500 28.500H32" stroke="#fff" strokeWidth="4" />
          </svg>
        </Dock>
        <Dock mark="dot">
          <svg viewBox="0 0 48 48" className="h-[48px] w-[48px]" fill="none">
            <path d="M2 4 28 5 33 11 37 42 3 45Z" fill="#f4f6f0" />
            <path d="M2.500 24H34.500L37 42 3 45Z" fill="#62cf22" />
            <path d="M3 20H34V27H3Z" fill="#b4e88c" />
            <path d="M3 5H25" stroke="#333" strokeWidth="3" strokeDasharray="1.500 1.500" />
            <path d="M8 29C8 21 13 18 19 19 24 20 26 23 22 26M12 29a4 4 0 1 0 6 3M6 27H27" stroke="#1d3a12" strokeWidth="1.600" />
            <circle cx="18" cy="18" r="3" fill="#fff" stroke="#222" />
            <circle cx="23" cy="18" r="3" fill="#fff" stroke="#222" />
            <path d="M20 39V31H24V37M27 35H33" stroke="#2c6b12" strokeWidth="1.400" />
            <path d="M45 4 31 34" stroke="#eba52c" strokeWidth="3.500" />
            <path d="M46.500 1.500 44.500 6" stroke="#d8584a" strokeWidth="4" />
          </svg>
        </Dock>
        <Dock>
          <Chrome className="h-[48px] w-[48px]" />
          <span className="absolute right-0 top-0 h-[24px] w-[24px] rounded-full bg-[radial-gradient(ellipse_at_50%_52%,#e9b391_0_32%,#6e3c22_46%,#23401f_78%)]" />
        </Dock>
        <Dock>
          <Chrome className="h-[48px] w-[48px]" />
          <span className="absolute right-0 top-0 flex h-[24px] w-[24px] items-center justify-center rounded-full bg-[#0e8f9c] text-[14px] leading-none text-white">V</span>
        </Dock>
        <Dock>
          <svg viewBox="0 0 48 48" className="h-[48px] w-[48px]">
            <rect width="48" height="48" fill="#ec83fb" />
            <path d="M0 0H20L0 34Z" fill="#7a4fd4" />
            <path d="M19 2 0 35M19 2 32 25M46 0 28 31M12 16.500H28M22 30.500H48M12 17 31 48M17 26 4 48M17 24 22 30.500" stroke="#5c3596" strokeWidth="1.300" fill="none" />
          </svg>
        </Dock>
        <Dock>
          <svg viewBox="0 0 44 44" className="h-[44px] w-[44px]">
            <rect width="44" height="44" rx="1" fill="#1a2be0" />
            <path d="M20 9H34L32 17H24L21 27H29L27 35H14V30H11L13 21 16 18 18 11Z" fill="#f1fb3d" />
          </svg>
        </Dock>
        <Dock>
          <SiOpenai className="h-[48px] w-[48px] text-white" />
        </Dock>
        <Dock mark="wide" active>
          <Chrome className="h-[48px] w-[48px]" />
          <span className="absolute -right-[10px] -top-[10px] h-[32px] w-[32px] rounded-full bg-[radial-gradient(ellipse_at_50%_40%,#f3efcf_0_10%,#a59a55_34%,#5c5636_62%,#34332d_90%)]" />
        </Dock>
        <Dock mark="dot">
          <svg viewBox="0 0 48 48" className="h-[48px] w-[48px]">
            <path d="M36 0V13L7 36Q5 37.500 3.500 36L.8 33.500Q-.5 32 .8 30.500L33 1.500Q34.500 0 36 0Z" fill="#0a70b8" />
            <path d="M36 48V35L7 12Q5 10.500 3.500 12L.8 14.500Q-.5 16 .8 17.500L33 46.500Q34.500 48 36 48Z" fill="#0c86d3" />
            <path d="M36 0 46.500 5Q48 6 48 7.500V40.500Q48 42 46.500 43L36 48Z" fill="#29a5f3" />
          </svg>
        </Dock>
        <Dock>
          <svg viewBox="0 0 48 48" className="h-[48px] w-[48px] rounded-[9px] bg-gradient-to-br from-[#6b73e8] to-[#4311b4]" strokeLinecap="round" strokeWidth="3.800">
            <path d="M22 10.500H31M30 15.500H40M28 21H35M20 27H29M28 32.500H35M38 38H41" stroke="#a79be8" />
            <path d="M8.500 10.500H25M17 15.500H33M12 21H28M6 27H22M12 32.500H28M25 38H34" stroke="#fff" />
          </svg>
        </Dock>
        <Dock mark="dot">
          <span className="flex h-[48px] w-[48px] items-center justify-center rounded-[7px] bg-[#dc6b48]">
            <SiClaude className="h-[35px] w-[35px] text-white" />
          </span>
        </Dock>
      </div>
      <div className="ml-auto flex text-[23px]">
        <div className="relative mr-[6px] mt-[14px] h-[60px] w-[42px]">
          <svg viewBox="0 0 24 40" className="absolute left-0 top-[15px] h-[40px] w-[22px]" fill="#f04e0b">
            <path d="M1 2 4 7 8 9V3L12 1 13 7 15 14 13 24 17 38 15 39 9 27 6 18 7 12 2 8Z" />
          </svg>
          <span className="absolute left-[9px] top-[-4px] flex h-[32px] w-[32px] items-center justify-center rounded-full bg-[#c42b1c] text-[20px]">3</span>
        </div>
        <div className="mt-[13px] w-[263px] leading-[32px]">
          <Fit className="w-[105px]">IND - LAS</Fit>
          <Fit className="w-[167px] text-[#cbc9c8]">Video highlight</Fit>
        </div>
        <svg viewBox="0 0 22 12" className="mt-[40px] h-[12px] w-[22px]" fill="none" stroke="#fff" strokeWidth="2.600">
          <path d="M1 11 11 1.500 21 11" />
        </svg>
        <svg viewBox="0 0 30 27" className="ml-[38px] mt-[33px] h-[27px] w-[30px]">
          <defs>
            <linearGradient id="cpa" x1="0" y1="0" x2="0" y2="1"><stop stopColor="#1e7fe0" /><stop offset=".5" stopColor="#3dc0b0" /><stop offset="1" stopColor="#e8cf3c" /></linearGradient>
            <linearGradient id="cpb" x1="0" y1="0" x2="0" y2="1"><stop stopColor="#a85cf0" /><stop offset=".5" stopColor="#ee5b9b" /><stop offset="1" stopColor="#f9a05c" /></linearGradient>
          </defs>
          <path d="M9 0H19Q22 0 23 4L24 7H18Q15 7 14 11L11 20Q10 21 8 21H4Q-1 20 0 15L4 4Q6 0 9 0Z" fill="url(#cpa)" />
          <path d="M21 27H12Q9 27 8 21H11Q14 21 15 17L18 8Q19 7 21 7H26Q31 8 30 13L26 23Q24 27 21 27Z" fill="url(#cpb)" />
        </svg>
        <svg viewBox="0 0 28 30" className="ml-[36px] mt-[30px] h-[30px] w-[28px]" fill="none" stroke="#fff" strokeWidth="2.800">
          <path d="M3 3 9 9.500Q17 8 20 13.500 20 20 13 21 7 20 8 14 9 10 13 9.500M3 28.500V20L8 16M3 24 13 21M17 10 19.500 6M19 15.500 25 19H14" />
          <circle cx="23.500" cy="5" r="4" fill="#e0234e" stroke="none" />
        </svg>
        <svg viewBox="0 0 32 32" className="ml-[33px] mt-[30px] h-[32px] w-[32px]" fill="none" stroke="#fff" strokeWidth="2">
          <path d="M21 1H4A3 3 0 0 0 1 4V22a3 3 0 0 0 3 3H26M11 25V30M20 25V30M7 31H24M28 14V31" />
          <rect x="23" y="2" width="8" height="12" rx="2" />
          <path d="M23 6.500H31" />
        </svg>
        <svg viewBox="0 0 34 28" className="ml-[15px] mt-[33px] h-[28px] w-[34px]" fill="none" stroke="#fff" strokeWidth="2" strokeLinejoin="round" strokeLinecap="round">
          <path d="M1 10V18H6L13 24V4L6 10ZM18 10Q20.500 14 18 18M22.500 6Q28 14 22.500 22M27 2Q36 14 27 26" />
        </svg>
        <div className="ml-[31px] mr-[38px] mt-[13px] flex flex-col items-end leading-[32px]">
          <Fit className="w-[100px]">11:57 AM</Fit>
          <Fit className="w-[110px]">8/30/2025</Fit>
        </div>
      </div>
    </div>
  );
}

export default function App() {
  return (
    <div className="flex h-[2160px] w-[3840px] flex-col overflow-hidden bg-[#2a2828]">
      <div className="flex h-[2067px] shrink-0">
        <LeftWindow />
        <RightWindow />
      </div>
      <Taskbar />
    </div>
  );
}
